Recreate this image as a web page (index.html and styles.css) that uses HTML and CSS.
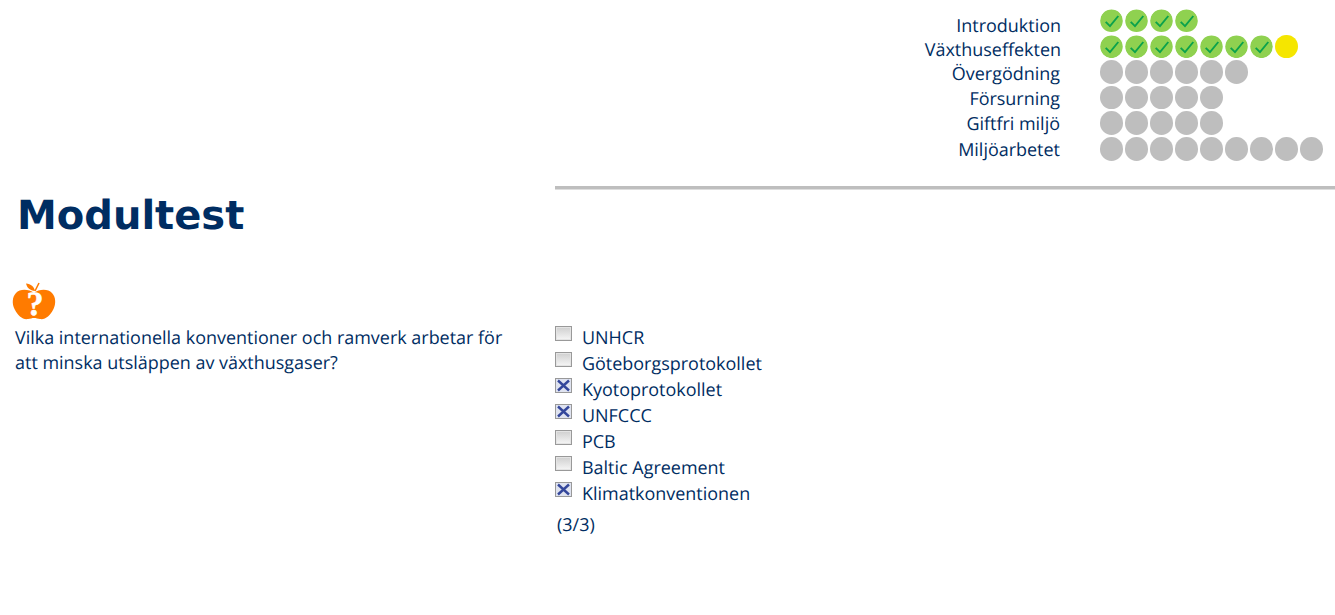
FILE: index.html
```html
<!DOCTYPE html>
<html lang="sv">
<head>
<meta charset="utf-8">
<title>Modultest</title>
<link rel="stylesheet" href="styles.css">
</head>
<body>
<svg class="defs" width="0" height="0" aria-hidden="true">
  <symbol id="done" viewBox="0 0 23 23"><circle cx="11.5" cy="11.5" r="11.3" fill="#8fd150"/><path d="M5.700 12.500l4.300 4.300 8.300-10.100" fill="none" stroke="#0ca24c" stroke-width="1.900"/></symbol>
  <symbol id="cross" viewBox="0 0 15 13"><path d="M2 1.500l11 10M13 1.500l-11 10" stroke="#34479b" stroke-width="2.400"/></symbol>
</svg>
<header class="top">
  <div class="progress">
    <div class="labels">
      <div class="label">Introduktion</div>
      <div class="label">Växthuseffekten</div>
      <div class="label">Övergödning</div>
      <div class="label">Försurning</div>
      <div class="label">Giftfri miljö</div>
      <div class="label">Miljöarbetet</div>
    </div>
    <div class="dotrows">
      <div class="dots"><svg class="dot"><use href="#done"/></svg><svg class="dot"><use href="#done"/></svg><svg class="dot"><use href="#done"/></svg><svg class="dot"><use href="#done"/></svg></div>
      <div class="dots"><svg class="dot"><use href="#done"/></svg><svg class="dot"><use href="#done"/></svg><svg class="dot"><use href="#done"/></svg><svg class="dot"><use href="#done"/></svg><svg class="dot"><use href="#done"/></svg><svg class="dot"><use href="#done"/></svg><svg class="dot"><use href="#done"/></svg><i class="dot yellow"></i></div>
      <div class="dots"><i class="dot"></i><i class="dot"></i><i class="dot"></i><i class="dot"></i><i class="dot"></i><i class="dot"></i></div>
      <div class="dots"><i class="dot"></i><i class="dot"></i><i class="dot"></i><i class="dot"></i><i class="dot"></i></div>
      <div class="dots"><i class="dot"></i><i class="dot"></i><i class="dot"></i><i class="dot"></i><i class="dot"></i></div>
      <div class="dots"><i class="dot"></i><i class="dot"></i><i class="dot"></i><i class="dot"></i><i class="dot"></i><i class="dot"></i><i class="dot"></i><i class="dot"></i><i class="dot"></i></div>
    </div>
  </div>
  <div class="rule"></div>
</header>
<h1 class="title">Modultest</h1>
<main class="quiz">
  <section class="question">
    <svg class="apple" viewBox="0 0 44 44" width="44" height="44">
      <path d="M22 11C17 7 8 6.500 4 11 0 15 0 22 2.500 27 6 34 11 38 16 37c2.500-.3 4-1 6-1s4 .7 6 1c5 1 10-3 13.500-10C44 22 44 15 40 11 36 6.500 27 7 22 11z" fill="#ff7b00"/>
      <path d="M23 9C18 8.500 15 6 14 1.500 19 2 22 4.500 23 9z" fill="#ff7b00"/>
      <path d="M23 9L27 1" stroke="#ff7b00" stroke-width="1.500" fill="none"/>
      <text x="23" y="33" class="apple-q">?</text>
    </svg>
    <p class="qtext">Vilka internationella konventioner och ramverk arbetar för att minska utsläppen av växthusgaser?</p>
  </section>
  <section class="answers">
    <div class="answer"><i class="box"></i><span>UNHCR</span></div>
    <div class="answer"><i class="box"></i><span>Göteborgsprotokollet</span></div>
    <div class="answer"><i class="box checked"><svg><use href="#cross"/></svg></i><span>Kyotoprotokollet</span></div>
    <div class="answer"><i class="box checked"><svg><use href="#cross"/></svg></i><span>UNFCCC</span></div>
    <div class="answer"><i class="box"></i><span>PCB</span></div>
    <div class="answer"><i class="box"></i><span>Baltic Agreement</span></div>
    <div class="answer"><i class="box checked"><svg><use href="#cross"/></svg></i><span>Klimatkonventionen</span></div>
    <p class="score">(3/3)</p>
  </section>
</main>
</body>
</html>
```
FILE: styles.css
```css
* { box-sizing: border-box; }
html, body { margin: 0; padding: 0; }
body {
  background: #fff;
  color: #002d62;
  font-family: "Open Sans", sans-serif;
  font-size: 17.970px;
  text-rendering: geometricPrecision;
  height: 615px;
  overflow: hidden;
}
.defs { display: block; height: 0; }
.top { display: flex; flex-direction: column; align-items: flex-end; padding-top: 9px; }
.progress { width: 780px; height: 153px; display: flex; }
.labels { width: 506px; text-align: right; padding-top: 5px; }
.label { height: 24px; line-height: 24px; }
.label:nth-child(n+3) { height: 25px; padding-right: 1px; }
.label:nth-child(5) { height: 26px; }
.dotrows { margin-left: 39px; }
.dots { display: flex; gap: 2px; height: 25.600px; }
.dot { display: block; width: 23px; height: 23.600px; border-radius: 50%; background: #bebebe; }
svg.dot { background: none; }
.yellow { background: #f5e600; }
.rule { width: 780px; height: 4px; background: #bebebe; border-bottom: 1px solid #dedede; margin-top: 24px; }
.title {
  margin: 0;
  padding: 0 0 0 17px;
  font-family: "DejaVu Sans", sans-serif;
  font-size: 40px;
  font-weight: 700;
  line-height: 53px;
}
.quiz { display: flex; padding-top: 39px; }
.question { width: 555px; padding-left: 12px; }
.apple { display: block; }
.apple-q { font-family: "Liberation Serif", serif; font-weight: 700; font-size: 34px; fill: #fff; stroke: #fff; stroke-width: .5px; text-anchor: middle; }
.qtext { margin: 0 0 0 3px; width: 500px; line-height: 24.600px; }
.answers { padding-top: 44px; }
.answer { display: flex; align-items: flex-start; height: 26px; line-height: 25px; }
.answer span { margin-left: 10px; }
.box {
  display: block;
  width: 17px; height: 15px;
  border: 1px solid #999;
  box-shadow: inset 0 0 0 1px #e4e4e4;
  background: linear-gradient(#cfcfcf, #f6f6f6);
}
.box.checked { background: #dfe3f0; box-shadow: none; }
.box svg { display: block; width: 15px; height: 13px; }
.score { margin: 4px 0 0 2px; line-height: 26px; }
```
